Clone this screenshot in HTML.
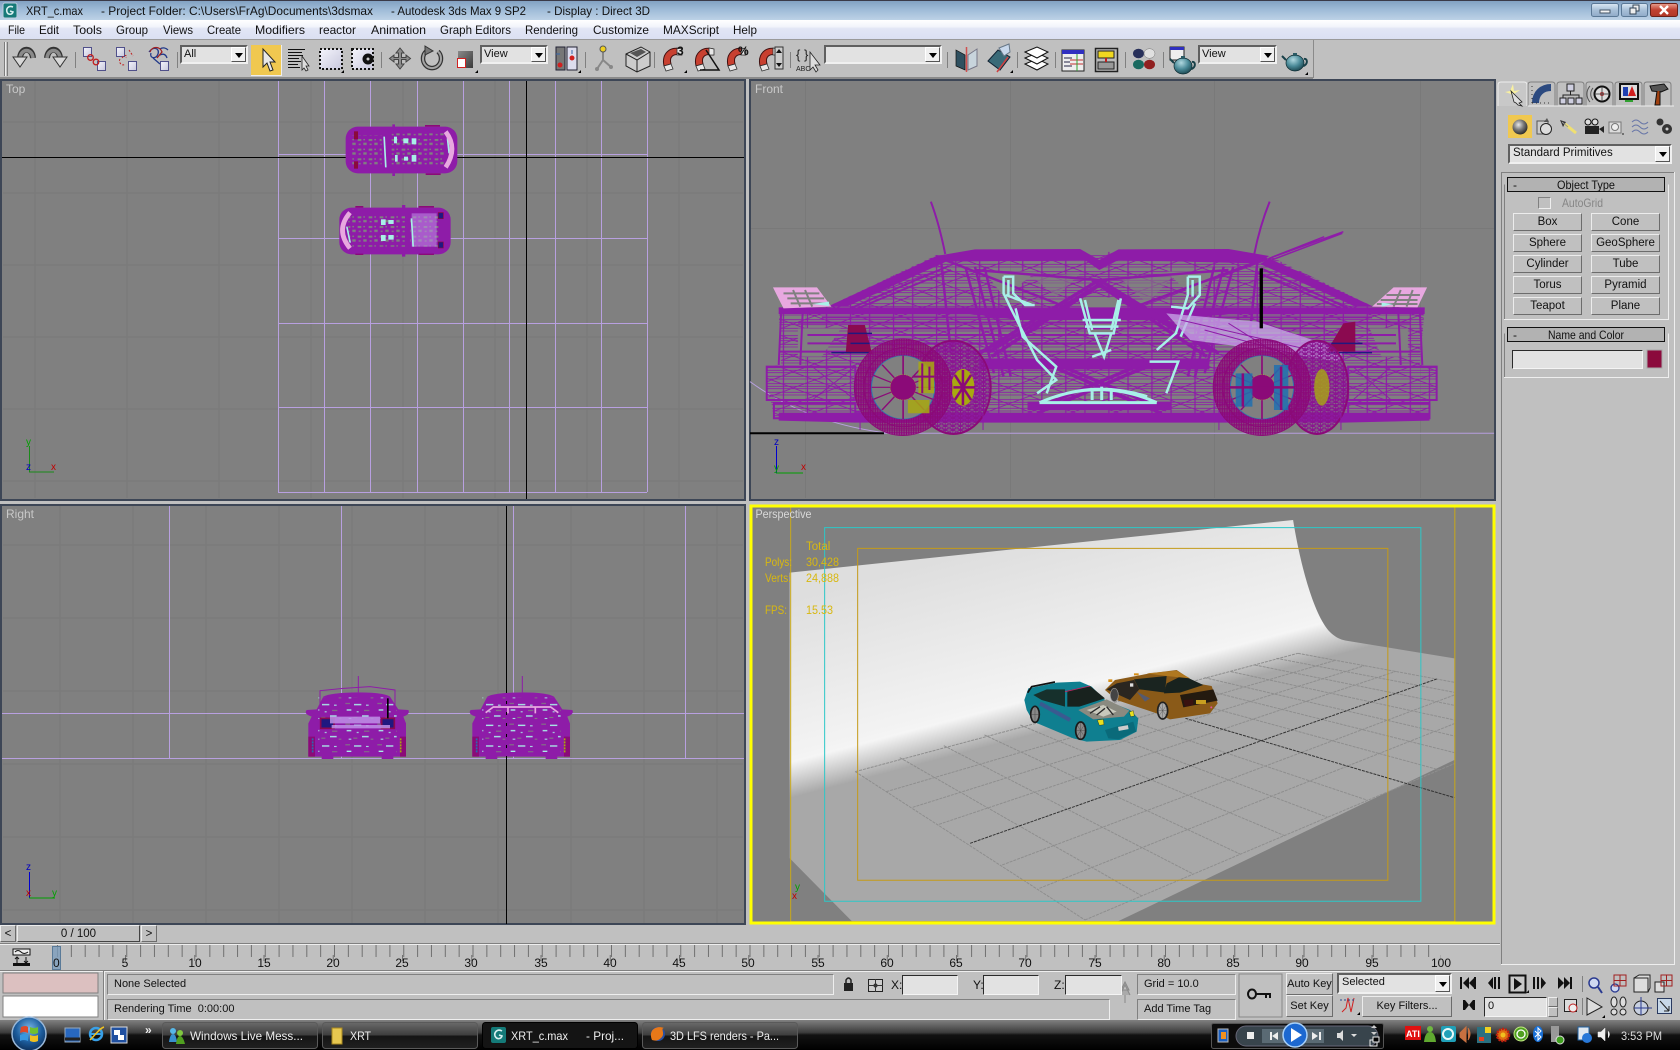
<!DOCTYPE html>
<html><head><meta charset="utf-8"><title>XRT_c.max - Autodesk 3ds Max 9 SP2</title>
<style>
html,body{margin:0;padding:0;background:#c0c0c0}
#r{position:relative;width:1680px;height:1050px;overflow:hidden;font:11px "Liberation Sans",sans-serif;color:#111}
svg{position:absolute;left:0;top:0}
svg text{font-family:"Liberation Sans",sans-serif;font-size:12px;fill:#111}
.ns *{vector-effect:non-scaling-stroke}
.b{position:absolute;box-sizing:border-box;background:#c0c0c0;border:1px solid;border-color:#ececec #6c6c6c #6c6c6c #ececec;text-align:center;font-size:11.5px;line-height:16px;white-space:nowrap}
.i{position:absolute;box-sizing:border-box;background:#e2e2e2;border:1px solid;border-color:#2a2a2a #f4f4f4 #f4f4f4 #2a2a2a}
.s{position:absolute;box-sizing:border-box;background:#c0c0c0;border:1px solid;border-color:#808080 #eee #eee #808080;padding-left:6px;white-space:nowrap;line-height:19px;font-size:11px}
.d{position:absolute;box-sizing:border-box;background:#e2e2e2;border:2px solid;border-color:#606060 #f0f0f0 #f0f0f0 #606060;padding-left:2px;line-height:15px;font-size:11px;white-space:nowrap}
.d:after{content:"";position:absolute;right:0;top:0;bottom:0;width:15px;background:#f0f0f0;border:1px solid;border-color:#fff #555 #555 #fff;box-sizing:border-box}
.d:before{content:"";position:absolute;z-index:2;right:3px;top:50%;margin-top:-2px;border:4px solid transparent;border-top:5px solid #000;border-bottom:0}
</style></head><body><div id="r">
<svg width="1680" height="1050" viewBox="0 0 1680 1050" xmlns="http://www.w3.org/2000/svg">
<defs>
<linearGradient id="tb" x1="0" y1="0" x2="0" y2="1"><stop offset="0" stop-color="#7f9fc0"/><stop offset=".5" stop-color="#a0bcd8"/><stop offset="1" stop-color="#bdd2e6"/></linearGradient>
<linearGradient id="mn" x1="0" y1="0" x2="0" y2="1"><stop offset="0" stop-color="#fff"/><stop offset=".35" stop-color="#f2f4fb"/><stop offset=".45" stop-color="#e2e6f5"/><stop offset="1" stop-color="#dbe0f2"/></linearGradient>
<linearGradient id="task" x1="0" y1="0" x2="0" y2="1"><stop offset="0" stop-color="#808080"/><stop offset=".42" stop-color="#3c3c3c"/><stop offset=".5" stop-color="#121212"/><stop offset="1" stop-color="#000"/></linearGradient>
<linearGradient id="tbtn" x1="0" y1="0" x2="0" y2="1"><stop offset="0" stop-color="#6a6a6a"/><stop offset=".48" stop-color="#3e3e3e"/><stop offset=".52" stop-color="#151515"/><stop offset="1" stop-color="#202020"/></linearGradient>
<linearGradient id="wall" gradientUnits="userSpaceOnUse" x1="300" y1="200" x2="651.6" y2="1136.2"><stop offset="0" stop-color="#dedede"/><stop offset=".44" stop-color="#f3f3f3"/><stop offset=".46" stop-color="#f5f5f5"/><stop offset=".56" stop-color="#a8a8a8"/><stop offset="1" stop-color="#a8a8a8"/></linearGradient>
<linearGradient id="cl" x1="0" y1="0" x2="0" y2="1"><stop offset="0" stop-color="#e8a090"/><stop offset=".5" stop-color="#c04030"/><stop offset="1" stop-color="#b03828"/></linearGradient>
<linearGradient id="wb" x1="0" y1="0" x2="0" y2="1"><stop offset="0" stop-color="#dce8f4"/><stop offset=".5" stop-color="#a8c0d8"/><stop offset="1" stop-color="#90aac8"/></linearGradient>
<linearGradient id="sc" x1="0" y1="0" x2="1" y2="1"><stop offset="0" stop-color="#8a8a8a"/><stop offset="1" stop-color="#3a3a3a"/></linearGradient>
<linearGradient id="lav" x1="0" y1="0" x2="1" y2="1"><stop offset="0" stop-color="#f4f4fc"/><stop offset="1" stop-color="#c8c8dc"/></linearGradient>
<radialGradient id="orb" cx=".5" cy=".35" r=".7"><stop offset="0" stop-color="#7ab8e8"/><stop offset=".55" stop-color="#1c5c9c"/><stop offset="1" stop-color="#0a2850"/></radialGradient>
<radialGradient id="ball" cx=".4" cy=".35" r=".7"><stop offset="0" stop-color="#e8e8e8"/><stop offset=".5" stop-color="#777"/><stop offset="1" stop-color="#222"/></radialGradient>
<radialGradient id="tea" cx=".4" cy=".3" r=".8"><stop offset="0" stop-color="#b0d8e0"/><stop offset=".5" stop-color="#4a8a98"/><stop offset="1" stop-color="#123840"/></radialGradient>
<pattern id="h" width="90" height="48" patternUnits="userSpaceOnUse"><path d="M0,2H90M0,13H90M0,21H90M0,35H90M0,43H90M0,0L90,48M90,0L0,48M30,0V48M70,0V48" stroke="#8e1ca8" stroke-width="2.6" fill="none"/></pattern>
<pattern id="hd" width="10" height="8" patternUnits="userSpaceOnUse"><path d="M0,1H10M0,5H10M2,0V8M7,0V8" stroke="#8b0a78" stroke-width="2.6" fill="none"/></pattern>
<pattern id="hl" width="16" height="12" patternUnits="userSpaceOnUse"><path d="M0,0H16M0,6H16M0,0L16,12M16,0L0,12M8,0V12" stroke="#8a1490" stroke-width="2.2" fill="none"/></pattern>
<pattern id="holes" width="33" height="29" patternUnits="userSpaceOnUse"><g fill="#808080"><rect x="2" y="3" width="11" height="6"/><rect x="19" y="14" width="10" height="7"/><rect x="19" y="3" width="5" height="4"/><rect x="5" y="17" width="6" height="4"/></g></pattern>
<pattern id="holec" width="96" height="62" patternUnits="userSpaceOnUse"><g fill="#808080"><rect x="4" y="5" width="14" height="3"/><rect x="60" y="26" width="16" height="3"/><rect x="28" y="47" width="12" height="3"/><rect x="80" y="50" width="8" height="3"/></g><g fill="#a8f0e8"><rect x="30" y="8" width="22" height="4"/><rect x="8" y="24" width="14" height="4"/><rect x="66" y="10" width="8" height="3"/><rect x="54" y="42" width="20" height="4"/><rect x="14" y="50" width="8" height="3"/><rect x="38" y="30" width="6" height="3"/></g></pattern>
<g id="mag"><path d="M2,20 C-1,6 10,0 19,3 L19,9 C11,7 7,11 9,18 Z" fill="#c84030" stroke="#401010" stroke-width="1"/><path d="M2,20 L9,18 L11,23 L4,25 Z" fill="#e8e8e8" stroke="#333" stroke-width=".8"/><path d="M15,2 L20,3 L20,9 L15,9 Z" fill="#e8e8e8" stroke="#333" stroke-width=".8"/></g>
<g id="tp"><ellipse cx="12" cy="14" rx="9" ry="8" fill="url(#tea)" stroke="#0c2a30" stroke-width=".7"/><path d="M3,11 L-1,7 M21,10 C25,9 25,16 20,17" stroke="#184048" stroke-width="2" fill="none"/><rect x="10" y="4" width="4" height="3" fill="#2a5a64"/></g>
<g id="wheel" fill="none">
<ellipse cx="0" cy="2" rx="102" ry="145" fill="url(#hd)" stroke="#8b0a78" stroke-width="2"/>
<ellipse cx="0" cy="2" rx="66" ry="95" fill="#808080" stroke="#2a7ab0" stroke-width="2"/>
<path d="M-66,2H66M0,-93V97M-44,-66L44,70M44,-66L-44,70M-62,-34L62,38M62,-34L-62,38" stroke="#8b0a78" stroke-width="3.5"/>
<ellipse cx="0" cy="2" rx="82" ry="118" stroke="#8b0a78" stroke-width="3"/>
<ellipse cx="0" cy="2" rx="27" ry="38" fill="#8b0a78" stroke="#c8c810" stroke-dasharray="2 2" stroke-width="1"/>
</g>
</defs>
<rect width="1680" height="1050" fill="#c0c0c0"/>
<!-- title -->
<rect width="1680" height="20" fill="url(#tb)"/><rect width="1680" height="1" fill="#3a3a48"/>
<rect x="3" y="3" width="14" height="15" rx="2" fill="#177a78" stroke="#bcd"/><path d="M13,7 C8,5 6,9 7,12 C8,15 12,15 13,12 L10,11" stroke="#d8f0f0" stroke-width="1.6" fill="none"/>
<text x="26" y="15" textLength="57" lengthAdjust="spacingAndGlyphs">XRT_c.max</text>
<text x="101" y="15" textLength="272" lengthAdjust="spacingAndGlyphs">- Project Folder: C:\Users\FrAg\Documents\3dsmax</text>
<text x="391" y="15" textLength="135" lengthAdjust="spacingAndGlyphs">- Autodesk 3ds Max 9 SP2</text>
<text x="547" y="15" textLength="103" lengthAdjust="spacingAndGlyphs">- Display : Direct 3D</text>
<rect x="1591.5" y="3.5" width="27" height="13" rx="2" fill="url(#wb)" stroke="#5a7896"/><rect x="1600" y="10" width="10" height="3" fill="#f4f4f4" stroke="#456"/>
<rect x="1621.5" y="3.5" width="26" height="13" rx="2" fill="url(#wb)" stroke="#5a7896"/><rect x="1633" y="5" width="6" height="6" fill="#eee" stroke="#345"/><rect x="1630" y="8" width="6" height="6" fill="#eee" stroke="#345"/>
<rect x="1650.5" y="3.5" width="27" height="13" rx="2" fill="url(#cl)" stroke="#6a2018"/><path d="M1660,6 L1668,14 M1668,6 L1660,14" stroke="#fff" stroke-width="2.4"/>
<!-- menu -->
<rect y="20" width="1680" height="19" fill="url(#mn)"/><rect y="39" width="1680" height="1" fill="#9a9a9a"/>
<g>
<text x="8" y="34" textLength="17" lengthAdjust="spacingAndGlyphs">File</text>
<text x="39" y="34" textLength="20" lengthAdjust="spacingAndGlyphs">Edit</text>
<text x="73" y="34" textLength="29" lengthAdjust="spacingAndGlyphs">Tools</text>
<text x="116" y="34" textLength="32" lengthAdjust="spacingAndGlyphs">Group</text>
<text x="163" y="34" textLength="30" lengthAdjust="spacingAndGlyphs">Views</text>
<text x="207" y="34" textLength="34" lengthAdjust="spacingAndGlyphs">Create</text>
<text x="255" y="34" textLength="50" lengthAdjust="spacingAndGlyphs">Modifiers</text>
<text x="319" y="34" textLength="37" lengthAdjust="spacingAndGlyphs">reactor</text>
<text x="371" y="34" textLength="55" lengthAdjust="spacingAndGlyphs">Animation</text>
<text x="440" y="34" textLength="71" lengthAdjust="spacingAndGlyphs">Graph Editors</text>
<text x="525" y="34" textLength="53" lengthAdjust="spacingAndGlyphs">Rendering</text>
<text x="593" y="34" textLength="56" lengthAdjust="spacingAndGlyphs">Customize</text>
<text x="663" y="34" textLength="56" lengthAdjust="spacingAndGlyphs">MAXScript</text>
<text x="733" y="34" textLength="24" lengthAdjust="spacingAndGlyphs">Help</text>
</g>
<!-- toolbar -->
<rect x="1313" y="40" width="1" height="38" fill="#8a8a8a"/><rect y="77" width="1313" height="2" fill="#8a8a8a"/>
<path d="M4.5,42V76M7.5,42V76" stroke="#7c7c7c"/><path d="M5.5,42V76" stroke="#eee"/>
<g stroke="#808080"><path d="M75.5,52V68M177.5,52V68M381.5,52V68M585.5,52V68M654.5,52V68M790.5,52V68M947.5,52V68M1017.5,52V68M1055.5,52V68M1125.5,52V68M1163.5,52V68"/></g>
<!-- undo redo -->
<path d="M33,58 C32,47 21,47 20,58" fill="none" stroke="#333" stroke-width="6"/><path d="M33,58 C32,48 21,48 20,58" fill="none" stroke="#8a8a8a" stroke-width="3.5"/><path d="M13,57 L27,57 L20,67 Z" fill="#d8d8d8" stroke="#333"/>
<path d="M47,58 C48,47 59,47 60,58" fill="none" stroke="#333" stroke-width="6"/><path d="M47,58 C48,48 59,48 60,58" fill="none" stroke="#8a8a8a" stroke-width="3.5"/><path d="M53,57 L67,57 L60,67 Z" fill="#d8d8d8" stroke="#333"/>
<!-- link -->
<rect x="83.500" y="47.500" width="8" height="9" fill="url(#lav)" stroke="#50508a"/><rect x="97.500" y="61.500" width="8" height="9" fill="url(#lav)" stroke="#50508a"/><circle cx="90.500" cy="57.500" r="2.800" fill="none" stroke="#c02020" stroke-width="1.300"/><circle cx="96" cy="62" r="2.800" fill="none" stroke="#c02020" stroke-width="1.300"/>
<rect x="116.500" y="47.500" width="8" height="9" fill="url(#lav)" stroke="#50508a"/><rect x="128.500" y="61.500" width="8" height="9" fill="url(#lav)" stroke="#50508a"/><path d="M122,58 C125,54 127,55 126,58M129,50 L133,56M120,59 C118,62 122,67 125,64" stroke="#c02020" fill="none" stroke-dasharray="2 1.500"/>
<path d="M149,52 C153,46 160,48 158,54 C156,60 149,58 151,53 M160,49 C163,47 166,48 168,50 M160,55 C164,53 166,55 167,58M153,58 L160,64" stroke="#223a8a" stroke-width="1.300" fill="none"/><path d="M150,52 C152,46 160,46 162,52 L157,58" stroke="#a02020" stroke-width="1.300" fill="none"/><rect x="160.500" y="61.500" width="8" height="9" fill="url(#lav)" stroke="#50508a"/>
<!-- select -->
<rect x="251" y="45" width="31" height="30" fill="#f0c850"/><path d="M251,75.500H282M281.500,45V75" stroke="#eee"/>
<path d="M263,49 L263,67 L267,63 L270,71 L273,70 L270,62 L275,62 Z" fill="#e8e8e8" stroke="#222"/>
<path d="M288,49.500H305M288,52.500H302M288,55.500H303M288,58.500H299M288,61.500H301M288,64.500H298M288,67.500H300" stroke="#111"/><path d="M302,56 L302,70 L304,68 L306,71 L308,70 L306,66 L309,66 Z" fill="#ddd" stroke="#222" stroke-width=".8"/>
<rect x="320" y="49" width="22" height="20" fill="url(#lav)" stroke="#111" stroke-dasharray="2 2" stroke-width="2"/><path d="M344,73 L344,70 L341,73 Z" fill="#000"/>
<rect x="352" y="49" width="21" height="20" fill="url(#lav)" stroke="#111" stroke-dasharray="2 2" stroke-width="2"/><circle cx="368" cy="59" r="5.500" fill="#111"/><circle cx="368" cy="59" r="1.500" fill="#ccc"/>
<!-- move rotate scale -->
<path d="M400,48 L404,53 H401.500 V57.500 H406 V55 L410.500,58.500 L406,62 V59.500 H401.500 V64 H404 L400,69 L396,64 H398.500 V59.500 H394 V62 L389.500,58.500 L394,55 V57.500 H398.500 V53 H396 Z" fill="#8c8c8c" stroke="#444"/>
<path d="M426,51.500 A9,9.500 0 1 0 438,51.500" fill="none" stroke="#333" stroke-width="4.500"/><path d="M426,51.500 A9,9.500 0 1 0 438,51.500" fill="none" stroke="#a4a4a4" stroke-width="2"/><path d="M425,46 L433,51 L425,55 Z" fill="#777" stroke="#333"/>
<rect x="458" y="51" width="15" height="17" fill="url(#sc)"/><rect x="457.500" y="58.500" width="8" height="9" fill="#fff" stroke="#d02020"/><path d="M478,73 L478,70 L475,73 Z" fill="#000"/>
<!-- pivot -->
<rect x="556" y="47" width="9" height="23" fill="#777" stroke="#223"/><rect x="567" y="47" width="10" height="23" fill="#dde" stroke="#223"/><circle cx="560" cy="65" r="2.5" fill="#d02020"/><circle cx="572" cy="58" r="2.5" fill="#d02020"/><path d="M560,54H556M572,50V54" stroke="#36a"/><path d="M581,73 L581,70 L578,73 Z" fill="#000"/>
<!-- manipulate -->
<path d="M603,49 L603,60 L597,69 M603,60 L611,67" stroke="#888" stroke-width="2" fill="none"/><circle cx="603" cy="49" r="3" fill="#f0d020" stroke="#555"/><circle cx="597" cy="69" r="2" fill="#888"/><circle cx="611" cy="67" r="2" fill="#888"/>
<path d="M626,54 L641,47 L650,52 L650,66 L637,72 L626,66 Z" fill="#ccc" stroke="#222"/><path d="M626,54 L637,60 L650,52 M637,60 V72" stroke="#222" fill="none"/><path d="M630,53 L641,49 L646,52 L637,57 Z" fill="#555"/>
<!-- snaps -->
<use href="#mag" x="662" y="46"/><text x="677" y="55" style="font-weight:bold;font-size:12px">3</text><path d="M687,73 L687,70 L684,73 Z" fill="#000"/>
<use href="#mag" x="694" y="46"/><path d="M706,50 L719,70 L700,70" fill="none" stroke="#111" stroke-width="1.5"/>
<use href="#mag" x="726" y="46"/><text x="738" y="55" style="font-weight:bold;font-size:12px">%</text>
<use href="#mag" x="758" y="46"/><rect x="775" y="47" width="8" height="22" fill="#ccc" stroke="#333"/><path d="M779,49 L782,53 H776 Z M779,67 L782,63 H776 Z" fill="#111"/>
<!-- named -->
<text x="796" y="59" style="font-size:13px;fill:#222">{ }</text><text x="796" y="71" style="font-size:7px;fill:#222">ABC</text><path d="M810,52 L810,70 L813,67 L816,72 L818,70 L815,65 L820,65 Z" fill="#ddd" stroke="#222" stroke-width=".8"/>
<!-- mirror align -->
<path d="M956,50 L965,55 L965,70 L956,66 Z" fill="#2f5060" stroke="#111" stroke-width=".7"/><path d="M968,55 L977,49 L977,66 L968,70 Z" fill="#c8d4dc" stroke="#778"/><path d="M966.5,47V72" stroke="#d05050" stroke-width="1.5"/>
<path d="M988,61 L998,50 L1010,57 L1000,70 Z" fill="#3a6a78" stroke="#123"/><path d="M999,48 L1009,44 L1010,52 L1004,56 Z" fill="#c8d8ec" stroke="#678"/><path d="M1008,57 L997,72" stroke="#d04040" stroke-width="1.5"/><path d="M1013,73 L1013,70 L1010,73 Z" fill="#000"/>
<!-- layers -->
<g fill="#fff" stroke="#111"><path d="M1025,64 L1037,59 L1048,64 L1037,70 Z"/><path d="M1025,58 L1037,53 L1048,58 L1037,64 Z"/><path d="M1025,52 L1037,47 L1048,52 L1037,58 Z"/></g>
<!-- curve -->
<rect x="1062" y="50" width="22" height="21" fill="#eee" stroke="#222"/><rect x="1062" y="50" width="22" height="4" fill="#3030c0"/><path d="M1064,58H1072M1064,62H1070M1064,66H1072" stroke="#224"/><path d="M1070,60H1083M1070,64H1083" stroke="#c03030"/><path d="M1077,54V71" stroke="#30a030"/>
<!-- schematic -->
<rect x="1095.5" y="48.5" width="22" height="23" fill="#bbb" stroke="#222" stroke-width="1.5"/><rect x="1098" y="51" width="16" height="7" fill="#f0d820" stroke="#222"/><rect x="1098" y="62" width="16" height="7" fill="#999" stroke="#222"/><path d="M1106,58V62" stroke="#c02020" stroke-width="2"/>
<!-- material -->
<ellipse cx="1138.500" cy="53.500" rx="5.500" ry="4.800" fill="#28305a"/><ellipse cx="1149.500" cy="53.500" rx="5.500" ry="4.800" fill="#e0e0e0" stroke="#777" stroke-width=".5"/><ellipse cx="1138.500" cy="64.500" rx="5.500" ry="4.800" fill="#1a6a60"/><ellipse cx="1149.500" cy="64.500" rx="5.500" ry="4.800" fill="#902020"/>
<rect x="1170" y="47" width="14" height="13" fill="#eee" stroke="#222"/><rect x="1170" y="47" width="14" height="3" fill="#3030c0"/><use href="#tp" x="1171" y="52"/>
<use href="#tp" x="1283" y="49"/><path d="M1308,75 L1308,72 L1305,75 Z" fill="#000"/>
<!-- right tabs -->
<g fill="#c0c0c0" stroke="#808080"><path d="M1527,106V85Q1527,82 1524,82H1501Q1498,82 1498,85V106" fill="#c8c8c8" stroke="#eee"/><path d="M1555,106V85Q1555,82 1552,82H1531Q1528,82 1528,85V106"/><path d="M1584,106V85Q1584,82 1581,82H1560Q1557,82 1557,85V106"/><path d="M1613,106V85Q1613,82 1610,82H1589Q1586,82 1586,85V106"/><path d="M1642,106V85Q1642,82 1639,82H1618Q1615,82 1615,85V106"/><path d="M1671,106V85Q1671,82 1668,82H1647Q1644,82 1644,85V106"/></g>
<path d="M1528,106H1674" stroke="#eee"/>
<path d="M1510,91 L1513,84 L1514,91 L1520,90 L1514,94 L1513,99 L1511,94 L1505,92 Z" fill="#f8f0a0"/><path d="M1511,91 L1522,102 L1519,103 L1522,106 L1518,105 L1516,103 L1514,102 Z" fill="#ddd" stroke="#222" stroke-width=".8"/>
<path d="M1534,103 C1534,92 1542,86 1551,86 M1537,103 C1537,94 1543,89 1551,89" stroke="#2c4a80" stroke-width="4" fill="none"/><path d="M1532,103H1551M1532,86V103" stroke="#333" stroke-dasharray="1 3"/>
<g fill="#cfcfe0" stroke="#222"><rect x="1567" y="84" width="7" height="7"/><rect x="1560" y="98" width="6" height="6"/><rect x="1568" y="98" width="6" height="6"/><rect x="1576" y="98" width="6" height="6"/></g><path d="M1570.5,91V95M1563,98V95H1579V98" fill="none" stroke="#222"/>
<circle cx="1602" cy="94" r="7.5" fill="#ddd" stroke="#111" stroke-width="2"/><circle cx="1602" cy="94" r="2" fill="#c02020"/><path d="M1602,87V101M1595,94H1609" stroke="#555"/><path d="M1593,88 A9,9 0 0 0 1593,100M1590,86 A12,12 0 0 0 1590,102" stroke="#555" fill="none"/>
<rect x="1620" y="84" width="18" height="15" fill="#ddd" stroke="#111" stroke-width="2"/><rect x="1623" y="87" width="5" height="9" fill="#2040b0"/><path d="M1632,86 L1636,96 L1628,96 Z" fill="#d02020"/><path d="M1625,101H1633" stroke="#30a030" stroke-width="2"/>
<path d="M1650,86 L1664,84 L1668,89 L1661,92 L1652,91 Z" fill="#555" stroke="#111"/><path d="M1657,91 L1655,105 H1660 L1660,91" fill="#a04010" stroke="#111"/>
<!-- create icons -->
<rect x="1508" y="115" width="24" height="23" fill="#f0c850"/><circle cx="1520" cy="127" r="7.5" fill="url(#ball)"/>
<path d="M1537,121H1548V134H1537Z" fill="#ccc" stroke="#555"/><circle cx="1546" cy="129" r="5.5" fill="#ddd" stroke="#222"/><path d="M1544,122 L1547,118 L1549,122" fill="#555"/>
<path d="M1560,120 L1566,122 L1563,127 Z" fill="#333"/><path d="M1565,124 L1576,133" stroke="#f0e070" stroke-width="3"/><path d="M1562,122 L1568,127" stroke="#999"/>
<rect x="1585" y="126" width="14" height="8" fill="#222"/><circle cx="1588" cy="122" r="3" fill="#ddd" stroke="#111"/><circle cx="1595" cy="122" r="3" fill="#ddd" stroke="#111"/><path d="M1599,129 L1604,126 V133 Z" fill="#222"/>
<rect x="1609" y="122" width="12" height="11" fill="#ddd" stroke="#777"/><circle cx="1615" cy="127" r="3.5" fill="#eee" stroke="#777"/><path d="M1622,134H1624" stroke="#222"/>
<path d="M1632,122 Q1636,118 1640,122 T1648,122M1632,127 Q1636,123 1640,127 T1648,127M1632,132 Q1636,128 1640,132 T1648,132" stroke="#6a78a8" fill="none"/>
<circle cx="1660" cy="122" r="3.5" fill="#333"/><circle cx="1667" cy="129" r="5" fill="#333"/><circle cx="1667" cy="129" r="1.5" fill="#ccc"/>
<!-- panel -->
<path d="M1501.5,964V172.5H1674" fill="none" stroke="#808080"/><path d="M1501,964.5H1674.5V172" fill="none" stroke="#eee"/>
<path d="M1504.5,184.5V319.5H1668.5V184.5" fill="none" stroke="#eee"/><path d="M1504.5,184.5V319" fill="none" stroke="#808080"/>
<path d="M1504.5,333.5V377.5H1668.5V333.5" fill="none" stroke="#eee"/><path d="M1504.5,333.5V377" fill="none" stroke="#808080"/>
<rect x="1507.5" y="177.5" width="157" height="14" fill="#b2b2b2" stroke="#111"/><rect x="1507.5" y="327.5" width="157" height="14" fill="#b2b2b2" stroke="#111"/>
<text x="1513" y="189">-</text><text x="1513" y="339">-</text>
<text x="1557" y="189" textLength="58" lengthAdjust="spacingAndGlyphs">Object Type</text>
<text x="1548" y="339" textLength="76" lengthAdjust="spacingAndGlyphs">Name and Color</text>
<rect x="1538.5" y="197.5" width="12" height="11" fill="#c0c0c0" stroke="#808080"/><path d="M1550.5,197.5V208.5H1538.5" stroke="#eee" fill="none"/>
<text x="1562" y="207" textLength="41" lengthAdjust="spacingAndGlyphs" style="fill:#858585">AutoGrid</text>
<rect x="1647" y="350" width="15" height="18" fill="#8b0a3c" stroke="#a8a8a8"/>
<!-- VIEWPORTS -->
<rect x="1" y="80" width="744" height="420" fill="#808080" stroke="#3d4656" stroke-width="2"/>
<rect x="750" y="80" width="745" height="420" fill="#808080" stroke="#3d4656" stroke-width="2"/>
<rect x="1" y="505" width="744" height="419" fill="#808080" stroke="#3d4656" stroke-width="2"/>
<rect x="750" y="505" width="745" height="419" fill="#808080"/>
<!-- Top grid -->
<g stroke="#797979"><path d="M3,122H743M3,193H743M3,265H743M3,337H743M3,409H743M3,481H743M35,81V498M127,81V498M219,81V498M311,81V498M403,81V498M495,81V498M587,81V498M679,81V498"/></g>
<g stroke="#b8a0e0"><path d="M278.5,81V492M324.5,81V492M370.5,81V492M417.5,81V492M463.5,81V492M509.5,81V492M555.5,81V492M601.5,81V492M647.5,81V492M278,154.5H647M278,238.5H647M278,323.5H647M278,407.5H647M278,492.5H647"/></g>
<path d="M2,157.5H744M526.5,81V499" stroke="#000"/>
<g transform="translate(280 80) scale(.3333)">
<rect x="197" y="140" width="335" height="140" rx="36" fill="#8e1ca8"/><path d="M337,133h8v10h-8zM337,280h8v8h-8z" fill="#8e1ca8"/><path d="M435,135h45v5h-45zM437,280h45v5h-45z" fill="#8b0a78"/>
<rect x="215" y="165" width="90" height="90" fill="url(#holes)"/><rect x="335" y="160" width="160" height="100" fill="url(#holes)"/>
<g fill="#a8f0e8"><path d="M310,170h5l5,92h-5z"/><rect x="342" y="170" width="9" height="20"/><rect x="370" y="175" width="15" height="15"/><rect x="395" y="175" width="14" height="18"/><rect x="345" y="225" width="8" height="20"/><rect x="372" y="230" width="12" height="12"/><rect x="395" y="225" width="14" height="20"/><path d="M500,175l5,0 5,45-5,0z"/></g>
<path d="M497,155 Q535,205 497,262" stroke="#e8a8e0" stroke-width="14" fill="none"/><rect x="222" y="154" width="12" height="24" fill="#8b0a3c"/><rect x="222" y="244" width="12" height="22" fill="#8b0a3c"/>
<rect x="178" y="383" width="334" height="140" rx="36" fill="#8e1ca8"/><path d="M366,375h10v10h-10zM366,520h10v10h-10z" fill="#8e1ca8"/><path d="M226,378h24v5h-24zM416,378h46v5h-46zM226,521h24v4h-24zM416,521h46v4h-46z" fill="#8b0a78"/>
<rect x="205" y="405" width="170" height="95" fill="url(#holes)"/><rect x="390" y="400" width="90" height="100" fill="url(#holes)"/>
<rect x="395" y="400" width="75" height="100" fill="#c090e8" opacity=".55"/>
<g fill="#a8f0e8"><path d="M392,415h5l5,85h-5z"/><rect x="303" y="418" width="14" height="17"/><rect x="325" y="420" width="16" height="12"/><rect x="303" y="465" width="14" height="18"/><rect x="325" y="465" width="16" height="14"/><path d="M198,440h5l10,48h-5z"/></g>
<path d="M210,398 Q165,450 210,505" stroke="#e8a8e0" stroke-width="14" fill="none"/><rect x="475" y="398" width="15" height="18" fill="#201880" stroke="#8b0a3c" stroke-width="2"/><rect x="475" y="486" width="15" height="18" fill="#201880" stroke="#8b0a3c" stroke-width="2"/>
</g>
<!-- Right grid -->
<g stroke="#797979"><path d="M3,545H743M3,618H743M3,691H743M3,764H743M3,837H743M3,910H743M60,506V923M133,506V923M206,506V923M279,506V923M352,506V923M425,506V923M498,506V923M571,506V923M644,506V923M717,506V923"/></g>
<g stroke="#b8a0e0"><path d="M169.5,506V758M341.5,506V758M513.5,506V758M685.5,506V758M2,713.5H744M2,758.5H744"/></g>
<path d="M506.5,506V924" stroke="#000"/>
<g transform="translate(280 660) scale(.3333)">
<g id="rc"><path d="M235,48V97" stroke="#8e1ca8" stroke-width="3"/>
<path d="M130,110 Q150,98 235,97 Q310,97 330,110 L355,148 L385,150 Q392,162 370,170 L378,190 V290 H340 V297 H305 V290 H160 V297 H125 V290 H85 V190 L95,170 Q70,162 80,150 L110,148 Z" fill="#8e1ca8"/>
<rect x="115" y="112" width="235" height="165" fill="url(#holec)"/>
<path d="M85,230H105V290H85ZM360,230H378V290H360Z" fill="#8b0a78"/><path d="M98,235V280" stroke="#2a6ab0" stroke-width="5" stroke-dasharray="6 3"/><path d="M362,235V280" stroke="#a8a810" stroke-width="5" stroke-dasharray="6 3"/></g>
<path d="M120,140V92L190,85L270,80L345,90V140" fill="none" stroke="#8e1ca8" stroke-width="3"/>
<rect x="122" y="175" width="40" height="30" fill="#201880" stroke="#8b0a50" stroke-width="5"/><rect x="305" y="175" width="38" height="30" fill="#201880" stroke="#8b0a50" stroke-width="5"/>
<path d="M150,170H300V190H150ZM155,195H330V205H155Z" fill="#c090e8" opacity=".85"/>
<rect x="321" y="115" width="5" height="60" fill="#000"/>
<use href="#rc" x="492"/>
<path d="M617,158 L640,141 L812,141 L835,158 M684,141V160M766,141V160" stroke="#e8a8e0" stroke-width="5" fill="none"/>
</g>
<path d="M506.5,690V760" stroke="#000" stroke-dasharray="3 8"/>
<!-- Front -->
<g stroke="#797979"><path d="M805.5,81V498M1010.5,81V498M1214.5,81V498M1420.5,81V498M751,228.5H1494M751,433.5H1494"/></g>
<g transform="translate(750 180) scale(.4785 .3333)" class="ns" fill="none">
<path d="M280,760H1555M0,605 Q120,730 290,760" stroke="#b8a0e0" stroke-width="1"/><path d="M0,760H280" stroke="#000" stroke-width="2"/>
<path d="M60,385 L165,378 L390,225 L730,215 L1085,228 L1300,378 L1410,385 L1400,555 L1435,560 L1435,640 L1420,670 L1420,715 L1250,725 L220,725 L50,715 L45,670 L35,640 L35,560 L65,555 Z" fill="url(#h)"/>
<g fill="#808080"><path d="M695,352H775L762,465H708Z"/><path d="M490,275L600,275L530,350Z"/><path d="M870,275L985,275L925,350Z"/><path d="M100,445L190,445L150,530H100Z"/><path d="M1295,445L1375,445L1375,530H1320Z"/><path d="M770,290L890,280L830,370Z" opacity=".6"/><path d="M590,290L690,280L640,350Z" opacity=".6"/></g>
<!-- solid bands -->
<g fill="#8e1ca8"><path d="M390,228L470,208L690,207L730,240L770,208L1000,207L1085,228L1060,250L770,240L730,270L700,240L410,245Z"/><path d="M60,382H1410V402H1000L880,420H560L460,402H60Z"/><path d="M480,535H960V568H480Z"/><path d="M60,698H1420V722L1240,728H220L60,722Z"/><path d="M580,665H880V690H580Z"/><path d="M165,378L390,228L410,245L205,378Z"/><path d="M1300,378L1085,235L1066,252L1262,378Z"/></g>
<g stroke="#8e1ca8">
<path d="M378,65 Q395,130 408,222M1086,65 Q1065,140 1053,228" stroke-width="2"/>
<path d="M1085,235 L1240,155 M1090,240 L1238,160 M1090,232 L1200,170" stroke-width="1.500"/>
<path d="M210,385L415,258M225,385L420,270M1250,385L1068,265M1235,385L1060,278" stroke-width="2"/>
<path d="M150,412H1300M100,428H1380M250,445H1200M120,465H1350M120,490H1350M60,515H1400" stroke-width="2"/>
<path d="M730,300L480,520M730,315L505,530M745,300L500,515M730,300L980,520M730,315L955,530M715,300L965,515M600,540L860,700M860,540L600,700M620,540L870,690M840,540L590,690" stroke-width="3.500"/>
<path d="M450,260L510,580M470,260L530,590M490,260L545,590M1010,260L950,580M990,260L930,590M970,260L915,590M390,230L730,420M1080,235L730,420M470,270L730,300M1000,270L730,300M400,250L420,520M1060,250L1040,520" stroke-width="2.500"/>
<path d="M35,560H220V660H35ZM1250,560H1435V660H1250ZM50,670H220V715H50ZM1250,670H1420V715H1250ZM65,400L60,555M110,400L105,555M1400,400L1405,555M1355,400L1360,555" stroke-width="2"/>
<path d="M130,560L220,660M130,660L220,560M1260,660L1340,560M1260,560L1340,660" stroke-width="1"/>
</g>
<!-- seats -->
<g stroke="#a8f0e8" stroke-width="2.500"><path d="M530,290H550V340L575,375H595M530,290V340L545,385L600,540L640,600L600,640M555,385L570,470L640,560L620,640M540,300V350M535,345L590,375"/><path d="M915,290H940V345L915,385L880,380M915,290V345L890,460L850,510M930,370L900,470M835,545H895L870,640M925,300V350"/><path d="M690,355L710,460H760L775,355M700,360L715,450M770,360L755,450M720,460L740,530L755,460M715,530L755,510M695,420H775M700,440H770"/><path d="M605,668Q730,590 850,668M605,668H850M640,650Q730,605 830,650M715,625V660M735,620V660M755,625V660" stroke-width="3"/></g>
<!-- lavender fender -->
<path d="M870,400L1060,425L1240,510L1230,545L1000,495L920,480Z" fill="#c8a8e8" opacity=".75"/>
<path d="M900,420L1200,520M950,450L1180,540M1000,430L1100,520" stroke="#8e1ca8" stroke-width="1"/>
<!-- wings/tails -->
<path d="M48,322H140L170,380L70,385Z" fill="#e8a8e0"/><path d="M70,340H145M78,355H155M85,370H160M90,330L105,380M115,330L130,380" stroke="#808080" stroke-width="2"/>
<path d="M1300,380L1345,322H1415L1395,382Z" fill="#e8a8e0"/><path d="M1330,345H1400M1318,360H1395M1310,372H1395M1360,330L1345,380M1385,330L1372,380" stroke="#808080" stroke-width="2"/>
<path d="M130,372L165,365L165,378Z M1320,368L1345,372L1320,380Z" fill="#a8f0e8"/>
<path d="M205,435H240L255,520H200Z" fill="#8b0a50"/><path d="M205,460H255M210,490H250M170,518H250" stroke="#201880" stroke-width="1.500"/>
<path d="M1205,515L1240,430L1265,425V515Z" fill="#8b0a50"/><path d="M1215,490H1280M1210,518H1300" stroke="#201880" stroke-width="1.500"/>
<!-- wheels -->
<ellipse cx="425" cy="622" rx="78" ry="140" fill="url(#hl)" stroke="#8b0a78" stroke-width="2"/><ellipse cx="445" cy="622" rx="24" ry="55" fill="#a8a810"/><path d="M445,570V675M425,622H470M428,585L462,660M462,585L428,660" stroke="#8b0a78" stroke-width="2.500"/>
<use href="#wheel" x="320" y="620"/>
<path d="M352,545H385V640H352ZM330,660H375V700H330Z" fill="#a8a810" opacity=".85"/><path d="M360,550V640M375,560V630M340,590H385" stroke="#8b0a78" stroke-width="2"/>
<ellipse cx="1185" cy="622" rx="65" ry="140" fill="url(#hl)" stroke="#8b0a78" stroke-width="2"/><ellipse cx="1195" cy="622" rx="16" ry="55" fill="#a8a810" opacity=".8"/>
<use href="#wheel" x="1070" y="620"/>
<path d="M1015,580H1050V680H1015ZM1095,555H1125V690H1095Z" fill="#2070b0" opacity=".85"/><path d="M1030,580V680M1110,560V690M1000,622H1140" stroke="#8b0a78" stroke-width="2.500"/>
<path d="M230,690V750M980,690V750M487,700V750M1235,700V750" stroke="#8e1ca8" stroke-width="1"/>
<path d="M1065,265H1072V445H1065Z" fill="#000"/>
</g>
<!-- Perspective -->
<g transform="translate(750 505) scale(.4785 .3333)" class="ns" fill="none">
<path d="M83,203 L1135,45 C1150,180 1180,340 1215,385 C1225,398 1235,405 1250,408 L1472,460 V765 L765,1252 H215 L83,1060 Z" fill="url(#wall)"/>
<g stroke="#8e8e8e" stroke-width="1" stroke-dasharray="3 1">
<path d="M220,800L700,1245M313,758L819,1173M405,722L926,1107M490,690L1024,1047M565,660L1117,992M640,630L1207,937M710,607L1291,886M840,560L1441,795M900,537L1472,743M950,518L1472,693M1005,500L1472,645M1055,480L1472,601M1100,460L1472,562M1145,445L1472,532"/>
<path d="M220,800L1145,445M285,860L1223,466M340,907L1284,482M395,958L1350,499M527,1080L1472,570M605,1150L1472,656M700,1245L1472,776"/></g>
<path d="M460,1015L1435,522M910,640L1472,878" stroke="#333" stroke-width="1" stroke-dasharray="3 1"/>
<rect x="85" y="3" width="1388" height="1247" stroke="#c8a818" stroke-width="1"/>
<rect x="156" y="68" width="1246" height="1121" stroke="#2cc8c8" stroke-width="1"/>
<rect x="225" y="130" width="1108" height="996" stroke="#c49a18" stroke-width="1"/>
</g>
<g transform="translate(990 650) scale(.3333)">
<!-- brown car -->
<path d="M345,120L375,90L480,70L560,60L620,100L665,108L683,160L660,190L540,208L500,190L380,150Z" fill="#8a5a18"/>
<path d="M432,88L530,78L525,128L448,118Z" fill="#1a2420"/><path d="M530,100L578,76L640,105L570,128L522,130Z" fill="#18221e"/>
<path d="M570,135L670,118L683,152L580,172Z" fill="#241a10"/><rect x="618" y="150" width="30" height="12" fill="#c8a020"/><path d="M580,150L610,148V165L585,170Z" fill="#3a1210"/><circle cx="664" cy="172" r="3" fill="#e050a0"/>
<path d="M470,70L560,62L600,85L530,78Z" fill="#b07820"/><path d="M350,118L380,100L432,90L448,118L420,150Z" fill="#2a2620"/><rect x="420" y="100" width="10" height="10" fill="#ddd"/><path d="M440,125L480,145L465,155Z" fill="#555a70"/>
<ellipse cx="373" cy="135" rx="12" ry="20" fill="#444" stroke="#999" stroke-width="2"/><ellipse cx="518" cy="182" rx="15" ry="25" fill="#aaa" stroke="#222" stroke-width="5"/><path d="M518,160V204M505,182H531M508,168L528,196M528,168L508,196" stroke="#444"/>
<rect x="432" y="70" width="14" height="6" fill="#d89018"/><rect x="355" y="88" width="12" height="8" fill="#d89018"/>
<!-- teal car -->
<path d="M103,150L115,115L200,98L270,95L305,110L345,150L420,180L445,205L440,245L390,270L290,275L250,265L130,215L110,180Z" fill="#0f7f90"/>
<path d="M130,135L170,118L225,118L225,170L155,150Z" fill="#16302c"/><path d="M232,122L300,108L345,145L268,170L232,170Z" fill="#18221e"/>
<path d="M225,125L300,108" stroke="#c02868" stroke-width="2.500"/><path d="M113,128L125,110L195,96" stroke="#111" stroke-width="5" fill="none"/>
<path d="M265,180L350,148L418,182L402,200L310,208Z" fill="#8a8a80"/><path d="M290,180L340,165L380,185L340,200Z" fill="#c8c8bc"/><path d="M300,190L330,170M350,170L370,195M320,195L345,175" stroke="#2a2a2a" stroke-width="4"/>
<path d="M322,210L340,208L342,224L328,226Z" fill="#e8e020" stroke="#111"/><path d="M418,186L430,182L433,198L422,200Z" fill="#e8e020" stroke="#111"/>
<path d="M345,240L430,215L438,245L385,268L355,265Z" fill="#0a6a7a"/><rect x="385" y="228" width="30" height="12" fill="#ccc" transform="rotate(-10 400 234)"/>
<path d="M150,160L240,210" stroke="#3a5a90" stroke-width="12"/>
<ellipse cx="135" cy="193" rx="13" ry="24" fill="#888" stroke="#1a1a1a" stroke-width="5"/><ellipse cx="272" cy="242" rx="15" ry="26" fill="#888" stroke="#1a1a1a" stroke-width="5"/><path d="M272,218V266M258,242H286M262,226L282,258M282,226L262,258M135,172V214M124,193H146" stroke="#333"/>
</g>
<rect x="751" y="506" width="743" height="417" fill="none" stroke="#ffff00" stroke-width="3"/>
<!-- viewport labels -->
<g><text x="6" y="93" style="fill:#c8c8c8">Top</text><text x="755" y="93" style="fill:#c8c8c8">Front</text><text x="6" y="518" style="fill:#c8c8c8">Right</text><text x="755.5" y="518" textLength="56" lengthAdjust="spacingAndGlyphs" style="fill:#d8d8d8">Perspective</text></g>
<g>
<text x="806" y="550" style="fill:#d8b810;font-size:11.5px">Total</text>
<text x="765" y="566" textLength="27" lengthAdjust="spacingAndGlyphs" style="fill:#d8b810">Polys:</text><text x="806" y="566" textLength="33" lengthAdjust="spacingAndGlyphs" style="fill:#d8b810">30,428</text>
<text x="765" y="582" textLength="26" lengthAdjust="spacingAndGlyphs" style="fill:#d8b810">Verts:</text><text x="806" y="582" textLength="33" lengthAdjust="spacingAndGlyphs" style="fill:#d8b810">24,888</text>
<text x="765" y="614" textLength="22" lengthAdjust="spacingAndGlyphs" style="fill:#d8b810">FPS:</text><text x="806" y="614" textLength="27" lengthAdjust="spacingAndGlyphs" style="fill:#d8b810">15.53</text></g>
<!-- gizmos -->
<g>
<path d="M29.5,446V472H54" stroke="#1a8a1a" fill="none"/><text x="26" y="445" style="font-size:10px;fill:#00a000">y</text><text x="26" y="470" style="font-size:10px;fill:#0000c0">z</text><text x="51" y="470" style="font-size:10px;fill:#c00000">x</text>
<path d="M776.5,446V473" stroke="#0000d0"/><path d="M776,473H803" stroke="#00a000"/><text x="774" y="445" style="font-size:10px;fill:#0000c0">z</text><text x="774" y="471" style="font-size:10px;fill:#00a000">y</text><text x="801" y="470" style="font-size:10px;fill:#c00000">x</text>
<path d="M29.5,872V898" stroke="#0000d0"/><path d="M29,898H55" stroke="#00a000"/><text x="26" y="870" style="font-size:10px;fill:#0000c0">z</text><text x="26" y="896" style="font-size:10px;fill:#c00000">x</text><text x="52" y="896" style="font-size:10px;fill:#00a000">y</text>
<text x="795" y="890" style="font-size:10px;fill:#00a000">y</text><text x="792" y="899" style="font-size:10px;fill:#c00000">x</text></g>
<!-- timeline -->
<path d="M0,943.5H1500" stroke="#808080"/><path d="M0,944.5H1500" stroke="#eee"/>
<path d="M57,951H1441" stroke="#707070" stroke-width="12" stroke-dasharray="1 12.85"/><path d="M125,958H1441" stroke="#707070" stroke-width="6" stroke-dasharray="1 68.25"/>
<g text-anchor="middle">
<text x="125" y="967">5</text><text x="195" y="967">10</text><text x="264" y="967">15</text><text x="333" y="967">20</text><text x="402" y="967">25</text><text x="471" y="967">30</text><text x="541" y="967">35</text><text x="610" y="967">40</text><text x="679" y="967">45</text><text x="748" y="967">50</text><text x="818" y="967">55</text><text x="887" y="967">60</text><text x="956" y="967">65</text><text x="1025" y="967">70</text><text x="1095" y="967">75</text><text x="1164" y="967">80</text><text x="1233" y="967">85</text><text x="1302" y="967">90</text><text x="1372" y="967">95</text><text x="1441" y="967">100</text></g>
<rect x="52.5" y="946.5" width="8" height="23" fill="#7c9cbc" fill-opacity=".8" stroke="#5a7a98"/><text x="53" y="967">0</text>
<rect x="13" y="949" width="17" height="6" fill="#eee" stroke="#111"/><path d="M15,952 Q18,949 21,952 T28,952" stroke="#111" fill="none"/><path d="M17,957V963M26,957V963M15,959L17,957L19,959M24,961L26,963L28,961" stroke="#111" fill="none"/><rect x="13" y="963" width="17" height="3" fill="#111"/>
<path d="M0,970.5H1500" stroke="#808080"/><path d="M0,971.5H1500" stroke="#eee"/><path d="M103.5,971V1020" stroke="#808080"/><path d="M104.5,971V1020" stroke="#eee"/>
<rect x="3" y="973" width="95" height="20" fill="#dcc0c0" stroke="#808080"/><rect x="3" y="996" width="95" height="21" fill="#fff" stroke="#808080"/>
<!-- status icons -->
<rect x="844" y="983" width="9" height="8" fill="#222"/><path d="M846,983V980Q848.500,976 851,980V983" stroke="#222" stroke-width="1.5" fill="none"/>
<rect x="868.500" y="979.500" width="14" height="12" fill="#ccc" stroke="#222"/><path d="M875.500,979V992M868,985.500H883" stroke="#333"/><circle cx="875.500" cy="985.500" r="2" fill="#333"/>
<text x="891" y="989">X:</text><text x="973" y="989">Y:</text><text x="1054" y="989">Z:</text>
<path d="M1120,995 L1125,985 L1130,995 M1125,982 L1121,990 L1129,990 Z M1125,995 V1003" stroke="#888" fill="#aaa"/>
<rect x="1239" y="974" width="43" height="43" fill="#c0c0c0" stroke="#888"/>
<ellipse cx="1252" cy="994" rx="4" ry="4.500" fill="none" stroke="#111" stroke-width="2"/><path d="M1256,994H1271M1266,994V998M1270,994V998" stroke="#111" stroke-width="2"/>
<path d="M1342,1012 L1346,1008 L1348,998 L1351,1012 L1354,998" fill="none" stroke="#d02020"/><path d="M1340,1000H1356" stroke="#2a4a90" stroke-dasharray="2 2"/><path d="M1360,1015 L1360,1012 L1357,1015 Z" fill="#000"/>
<!-- playback -->
<g fill="#111">
<path d="M1460,977h2v12h-2zM1475,977v12l-6,-6zM1469,977v12l-6,-6zM1474,977h2v12h-2z"/>
<path d="M1488,983l5,-6v12zM1494,977h2v12h-2zM1498,977h2v12h-2z"/>
<rect x="1509.500" y="975.500" width="16" height="17" fill="#c8c8c8" stroke="#111" stroke-width="2"/><path d="M1514,978l8,6l-8,6z"/><path d="M1529,993 L1529,990 L1526,993 Z"/>
<path d="M1533,977h2v12h-2zM1537,977h2v12h-2zM1541,977v12l5,-6z"/>
<path d="M1558,977v12l6,-6zM1564,977v12l6,-6zM1570,977h2v12h-2z"/>
<path d="M1463,1000h2v10h-2zM1473,1000h2v10h-2zM1465,1000v10l4,-5zM1473,1000v10l-4,-5z"/></g>
<path d="M1582.500,976V992M1582.500,998V1015" stroke="#808080"/>
<circle cx="1594" cy="983" r="5" fill="#cfd8f0" stroke="#2a3a90" stroke-width="1.500"/><path d="M1598,987L1602,993" stroke="#2a3a90" stroke-width="2"/>
<circle cx="1615" cy="988" r="4" fill="#cfd8f0" stroke="#2a3a90" stroke-width="1.300"/><rect x="1614" y="975" width="12" height="11" fill="none" stroke="#a02020"/><path d="M1620,975V986M1614,980.500H1626" stroke="#a02020"/>
<path d="M1634,978H1648V992H1634ZM1634,978L1639,975H1650V988L1648,992" fill="#ddd" stroke="#222"/>
<rect x="1655" y="982" width="9" height="10" fill="#ddd" stroke="#222"/><rect x="1661" y="975" width="11" height="11" fill="none" stroke="#a02020"/><path d="M1666.500,975V986M1661,980.500H1672" stroke="#a02020"/>
<rect x="1564.500" y="999.500" width="12" height="12" fill="#ddd" stroke="#222"/><circle cx="1573" cy="1008" r="4" fill="#eee" stroke="#c02020"/>
<path d="M1587,998 L1602,1007 L1587,1015 Z" fill="#ddd" stroke="#222"/><path d="M1605,1018 L1605,1015 L1602,1018 Z" fill="#000"/>
<g fill="#ddd" stroke="#222"><ellipse cx="1614" cy="1002" rx="3" ry="5"/><ellipse cx="1623" cy="1002" rx="3" ry="5"/><ellipse cx="1614" cy="1012" rx="3" ry="3"/><ellipse cx="1623" cy="1012" rx="3" ry="3"/></g>
<circle cx="1641" cy="1008" r="7" fill="#c8d0e0" stroke="#222"/><path d="M1641,997V1015M1634,1008H1652" stroke="#2a3a90"/>
<rect x="1657.500" y="998.500" width="14" height="15" fill="#c8d8e8" stroke="#2a3a60"/><path d="M1660,1001L1669,1011M1669,1011V1006M1669,1011H1664" stroke="#222" fill="none"/>
<!-- taskbar -->
<rect y="1020" width="1680" height="30" fill="url(#task)"/>
<circle cx="29" cy="1034" r="17" fill="url(#orb)" stroke="#9ab8d8" stroke-width="1.500"/>
<path d="M21,1027 Q26,1025 28,1027 L28,1033 Q24,1031 20,1033 Z" fill="#e04828"/><path d="M30,1027 Q34,1029 38,1027 L38,1033 Q34,1035 30,1033 Z" fill="#70c030"/><path d="M20,1035 Q24,1033 28,1035 L28,1041 Q24,1039 20,1041 Z" fill="#3898e0"/><path d="M30,1035 Q34,1037 38,1035 L38,1041 Q34,1043 30,1041 Z" fill="#f0c020"/>
<rect x="65" y="1028" width="15" height="14" fill="#2868c0" stroke="#9ab"/><path d="M65,1039H80" stroke="#222" stroke-width="3"/>
<circle cx="96" cy="1034" r="6" fill="none" stroke="#38a0e8" stroke-width="2.500"/><path d="M90,1034H102" stroke="#38a0e8" stroke-width="2"/><path d="M90,1040C96,1034 100,1028 104,1027" stroke="#f0c020" stroke-width="1.500" fill="none"/>
<rect x="111" y="1027" width="16" height="16" fill="#2050a0" stroke="#ddd"/><rect x="114" y="1030" width="6" height="5" fill="#fff"/><rect x="118" y="1035" width="6" height="5" fill="#fff"/>
<text x="145" y="1034" style="fill:#eee;font-weight:bold">»</text>
<g stroke="#5a5a5a"><rect x="162.500" y="1022.500" width="155" height="26" rx="3" fill="url(#tbtn)"/><rect x="322.500" y="1022.500" width="155" height="26" rx="3" fill="url(#tbtn)"/><rect x="482.500" y="1022.500" width="155" height="26" rx="3" fill="#141414" stroke="#000"/><rect x="642.500" y="1022.500" width="155" height="26" rx="3" fill="url(#tbtn)"/></g>
<circle cx="173" cy="1031" r="3" fill="#58b8e8"/><path d="M169,1042Q170,1034 173,1034Q176,1034 177,1042Z" fill="#3890d0"/><circle cx="180" cy="1033" r="3" fill="#80c840"/><path d="M176,1044Q177,1036 180,1036Q183,1036 185,1044Z" fill="#50a020"/>
<path d="M332,1028H342V1044H332Z" fill="#e8c850" stroke="#a88820"/>
<rect x="491" y="1027" width="15" height="16" rx="2" fill="#147a78"/><path d="M502,1031C497,1028 494,1033 495,1036C497,1040 501,1039 502,1036L499,1035" stroke="#d8f0f0" stroke-width="1.600" fill="none"/>
<circle cx="658" cy="1034" r="7" fill="#2a50a0"/><path d="M652,1040C648,1030 656,1025 664,1028C660,1028 666,1034 661,1038C658,1041 655,1041 652,1040Z" fill="#e87818"/>
<g>
<text x="190" y="1040" textLength="113" lengthAdjust="spacingAndGlyphs" style="fill:#eee">Windows Live Mess...</text>
<text x="350" y="1040" textLength="21" lengthAdjust="spacingAndGlyphs" style="fill:#eee">XRT</text>
<text x="511" y="1040" textLength="57" lengthAdjust="spacingAndGlyphs" style="fill:#eee">XRT_c.max</text><text x="586" y="1040" textLength="38" lengthAdjust="spacingAndGlyphs" style="fill:#eee">- Proj...</text>
<text x="670" y="1040" textLength="109" lengthAdjust="spacingAndGlyphs" style="fill:#eee">3D LFS renders - Pa...</text></g>
<!-- media player -->
<rect x="1211.500" y="1023.500" width="172" height="25" rx="2" fill="#0c0c0c" stroke="#555"/><rect x="1218" y="1029" width="10" height="13" fill="#1c60c0" stroke="#bbb"/><rect x="1221" y="1032" width="5" height="7" fill="#f09020"/>
<rect x="1236" y="1026" width="142" height="20" rx="10" fill="#38444c" stroke="#667"/><rect x="1247" y="1032" width="7" height="7" fill="#eee"/>
<path d="M1262,1029H1286V1043H1262Z" fill="#5a6a74"/><path d="M1272,1036l6,-4v8zM1270,1032h2v8h-2z" fill="#eee"/>
<path d="M1304,1029H1324V1043H1304Z" fill="#5a6a74"/><path d="M1318,1036l-6,-4v8zM1319,1032h2v8h-2z" fill="#eee"/>
<circle cx="1295" cy="1035" r="12" fill="#1c68d0" stroke="#a8d0f8" stroke-width="1.500"/><path d="M1291,1028l11,7l-11,7z" fill="#fff"/>
<path d="M1337,1033h3l3,-3v11l-3,-3h-3zM1351,1034l3,3l3,-3z" fill="#ddd"/>
<path d="M1371,1028l3,-3l3,3zM1371,1032l3,3l3,-3z" fill="#ccc"/><rect x="1370" y="1040" width="7" height="6" fill="none" stroke="#eee"/><rect x="1373" y="1037" width="6" height="5" fill="#000" stroke="#eee"/>
<!-- tray -->
<rect x="1405" y="1026" width="16" height="14" fill="#e01010"/><text x="1406" y="1037" style="fill:#fff;font-size:9px;font-weight:bold">ATI</text>
<circle cx="1430" cy="1029" r="3" fill="#70b840"/><path d="M1424,1042Q1425,1032 1430,1032Q1435,1032 1436,1042Z" fill="#60a830"/>
<rect x="1441" y="1026" width="15" height="16" rx="2" fill="#20a0b8"/><circle cx="1448" cy="1034" r="5" fill="none" stroke="#e8f8f8" stroke-width="2"/>
<path d="M1460,1033l6,-6v15l-6,-5zM1468,1028q4,6 0,12" fill="#c87040" stroke="#c87040"/>
<rect x="1477" y="1027" width="14" height="16" fill="#2a7080"/><rect x="1485" y="1027" width="6" height="6" fill="#f0d020"/><rect x="1479" y="1037" width="5" height="4" fill="#e04020"/>
<circle cx="1503" cy="1035" r="6" fill="#e07010" stroke="#c02010" stroke-width="2.500" stroke-dasharray="2 1"/><circle cx="1503" cy="1035" r="2.500" fill="#f0c020"/>
<circle cx="1521" cy="1034" r="7" fill="#50a020" stroke="#c0e880"/><path d="M1517,1034a4,4 0 0 1 8,0M1525,1034a4,4 0 0 1 -8,0" stroke="#fff" fill="none" stroke-width="1.300"/>
<ellipse cx="1538" cy="1034" rx="5" ry="8" fill="#1870d8"/><path d="M1535,1031l6,6l-3,3v-12l3,3l-6,6" stroke="#fff" fill="none"/>
<rect x="1551" y="1026" width="8" height="16" fill="#999"/><circle cx="1560" cy="1040" r="4" fill="#40a020" stroke="#ddd"/>
<rect x="1578" y="1027" width="11" height="13" fill="#e0e8f0" stroke="#2060a0"/><circle cx="1587" cy="1038" r="5" fill="#2878d8"/>
<path d="M1598,1032h3l4,-4v13l-4,-4h-3zM1608,1031q3,3 0,7" fill="#eee" stroke="#eee" stroke-width=".5"/>
<text x="1621" y="1040" textLength="41" lengthAdjust="spacingAndGlyphs" style="fill:#ddd">3:53 PM</text>
</svg>
<!-- widgets -->
<div class="d" style="left:180px;top:45px;width:68px;height:19px">All</div>
<div class="d" style="left:480px;top:45px;width:68px;height:19px">View</div>
<div class="d" style="left:824px;top:45px;width:118px;height:19px"></div>
<div class="d" style="left:1198px;top:45px;width:79px;height:19px">View</div>
<div class="d" style="left:1508px;top:144px;width:164px;height:20px;padding-left:3px;font-size:11.5px">Standard Primitives</div>
<div class="b" style="left:1513px;top:213px;width:69px;height:18px">Box</div><div class="b" style="left:1591px;top:213px;width:69px;height:18px">Cone</div>
<div class="b" style="left:1513px;top:234px;width:69px;height:18px">Sphere</div><div class="b" style="left:1591px;top:234px;width:69px;height:18px">GeoSphere</div>
<div class="b" style="left:1513px;top:255px;width:69px;height:18px">Cylinder</div><div class="b" style="left:1591px;top:255px;width:69px;height:18px">Tube</div>
<div class="b" style="left:1513px;top:276px;width:69px;height:18px">Torus</div><div class="b" style="left:1591px;top:276px;width:69px;height:18px">Pyramid</div>
<div class="b" style="left:1513px;top:297px;width:69px;height:18px">Teapot</div><div class="b" style="left:1591px;top:297px;width:69px;height:18px">Plane</div>
<div class="i" style="left:1512px;top:350px;width:131px;height:19px"></div>
<div class="b" style="left:0;top:925px;width:16px;height:17px">&lt;</div><div class="b" style="left:17px;top:925px;width:123px;height:17px;border-color:#ececec #444 #444 #ececec">0 / 100</div><div class="b" style="left:141px;top:925px;width:16px;height:17px">&gt;</div>
<div class="s" style="left:107px;top:974px;width:727px;height:21px">None Selected</div>
<div class="s" style="left:107px;top:999px;width:1003px;height:21px">Rendering Time&nbsp; 0:00:00</div>
<div class="i" style="left:902px;top:975px;width:56px;height:20px"></div><div class="i" style="left:983px;top:975px;width:56px;height:20px"></div><div class="i" style="left:1065px;top:975px;width:57px;height:20px"></div>
<div class="s" style="left:1137px;top:974px;width:99px;height:21px">Grid = 10.0</div>
<div class="s" style="left:1137px;top:999px;width:99px;height:21px">Add Time Tag</div>
<div class="b" style="left:1286px;top:973px;width:47px;height:22px;line-height:20px;font-size:11px">Auto Key</div>
<div class="b" style="left:1286px;top:995px;width:47px;height:22px;line-height:20px;font-size:11px">Set Key</div>
<div class="d" style="left:1337px;top:973px;width:115px;height:21px;padding-left:3px">Selected</div>
<div class="b" style="left:1362px;top:996px;width:90px;height:21px;line-height:19px;font-size:11px">Key Filters...</div>
<div class="i" style="left:1484px;top:997px;width:63px;height:20px;padding-left:3px;line-height:17px">0</div>
<div class="b" style="left:1548px;top:997px;width:10px;height:10px"></div><div class="b" style="left:1548px;top:1007px;width:10px;height:10px"></div>
</div></body></html>
